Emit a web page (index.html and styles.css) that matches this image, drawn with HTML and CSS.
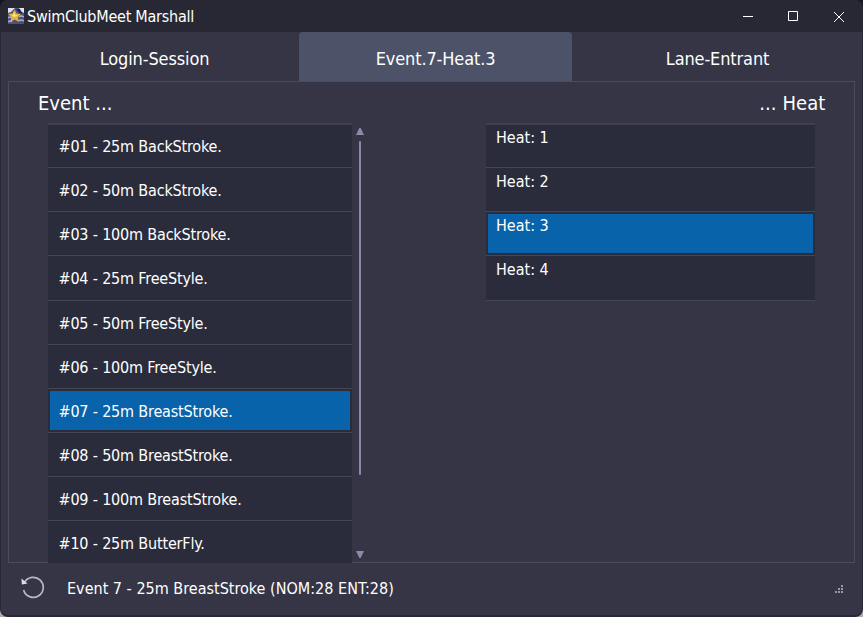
FILE: index.html
```html
<!DOCTYPE html>
<html lang="en">
<head>
<meta charset="utf-8">
<title>SwimClubMeet Marshall</title>
<link rel="stylesheet" href="styles.css">
</head>
<body>
<div class="window">
  <header class="titlebar">
    <svg class="logo" width="16" height="16" viewBox="0 0 16 16">
      <rect width="16" height="16" fill="#4a5080"/>
      <path d="M0 0H7L3 4L0 5ZM11 0H16V5L12 3Z" fill="#dfe1ed"/>
      <path d="M8 1H12L14 5L12 6Z" fill="#202545"/>
      <path d="M0 10Q2 8 4 10M0 14Q2 12 4 14M11 9Q13 7 16 9M11 13Q13 11 16 13" fill="none" stroke="#aeb2d5" stroke-width="1.3"/>
      <path d="M6.500 1.500L8.500 5.500L13 6L10 9L11 14L6.700 11.500L2.400 14L3.300 9L0 6L4.500 5.500Z" fill="#e4b33c"/>
      <path d="M6.300 4L7.200 7H10L7 9L4 8Z" fill="#ffdf7c"/>
    </svg>
    <h1 class="title">SwimClubMeet Marshall</h1>
    <svg class="controls" width="104" height="14" viewBox="0 0 104 14" fill="none" stroke="#fff">
      <path d="M0 6.500H10M45.500 1.500H54.500V10.500H45.500ZM91 2L101 12M101 2L91 12"/>
    </svg>
  </header>
  <nav class="tabs">
    <span class="tab">Login-Session</span>
    <span class="tab active">Event.7-Heat.3</span>
    <span class="tab">Lane-Entrant</span>
  </nav>
  <main class="panel">
    <section class="events">
      <h2>Event ...</h2>
      <div class="scroller">
        <ul class="list">
          <li>#01 - 25m BackStroke.</li>
          <li>#02 - 50m BackStroke.</li>
          <li>#03 - 100m BackStroke.</li>
          <li>#04 - 25m FreeStyle.</li>
          <li>#05 - 50m FreeStyle.</li>
          <li>#06 - 100m FreeStyle.</li>
          <li class="selected">#07 - 25m BreastStroke.</li>
          <li>#08 - 50m BreastStroke.</li>
          <li>#09 - 100m BreastStroke.</li>
          <li>#10 - 25m ButterFly.</li>
        </ul>
        <div class="scrollbar">
          <svg width="8" height="7" viewBox="0 0 8 7"><path d="M3.300 0H4.700L8 7H0Z"/></svg>
          <div class="thumb"></div>
          <svg width="8" height="7" viewBox="0 0 8 7"><path d="M0 0H8L4.700 7H3.300Z"/></svg>
        </div>
      </div>
    </section>
    <section class="heats">
      <h2>... Heat</h2>
      <ul class="list">
        <li>Heat: 1</li>
        <li>Heat: 2</li>
        <li class="selected">Heat: 3</li>
        <li>Heat: 4</li>
      </ul>
    </section>
  </main>
  <footer class="status">
    <svg class="refresh" width="24" height="24" viewBox="0 0 24 24">
      <path d="M3.500 7.500A10 10 0 1 1 2.600 15" fill="none" stroke="#b7b7c8" stroke-width="1.700"/>
      <path d="M0.500 3.500L0.800 9.500L6.500 8.600Z" fill="#dcdce6"/>
    </svg>
    <span class="message">Event 7 - 25m BreastStroke (NOM:28 ENT:28)</span>
    <svg class="grip" width="8" height="8" viewBox="0 0 8 8" fill="#9698ad">
      <path d="M6 0h2v2h-2zM3 3h2v2h-2zM6 3h2v2h-2zM0 6h2v2h-2zM3 6h2v2h-2zM6 6h2v2h-2z"/>
    </svg>
  </footer>
</div>
</body>
</html>
```
FILE: styles.css
```css
* { box-sizing: border-box; }
body { margin: 0; background: linear-gradient(#16161f 50%, #aaa 50%); }
.window {
  width: 863px; height: 617px;
  display: flex; flex-direction: column;
  overflow: hidden;
  border: solid #272735; border-width: 0 1px 2px;
  border-radius: 8px;
  background: #353546;
  color: #fff;
  font-family: Tahoma, "DejaVu Sans Condensed", "DejaVu Sans", sans-serif;
  font-stretch: condensed;
  font-size: 16px;
  letter-spacing: -0.18px;
  white-space: nowrap;
}
h1, h2, ul { margin: 0; padding: 0; font-weight: 400; list-style: none; }
.titlebar { height: 32px; flex: none; display: flex; align-items: center; padding: 0 17px 0 7px; background: #272834; }
.title { font-size: 16px; margin-left: 3px; line-height: 32px; padding-top: 2px; letter-spacing: -0.25px; }
.controls { margin-left: auto; margin-right: -2px; margin-top: 2px; }
.tabs { height: 49px; flex: none; display: grid; grid-template-columns: 273px 273px 273px; justify-content: center; margin-left: 13px; margin-right: 6px; }
.tab { display: flex; align-items: center; justify-content: center; font-size: 18px; padding-top: 4px; padding-left: 1px; letter-spacing: -0.13px; }
.tab:first-child { padding-right: 16px; }
.tab:last-child { padding-left: 19px; }
.tab.active { background: #4c5268; border-radius: 4px 4px 0 0; }
.panel { height: 482px; flex: none; margin: 0 7px; border: 1px solid #4a4b5c; display: flex; justify-content: space-between; }
h2 { font-size: 20px; height: 41px; line-height: 42px; letter-spacing: 0; }
.events { width: 356px; padding-left: 39px; }
.events h2 { margin-left: -10px; }
.scroller { display: flex; height: 440px; }
.list { width: 304px; }
.list li { height: 44.15px; border-top: 1px solid #454655; background: #2b2c3b; padding-left: 10.5px; line-height: 46.2px; }
.list li:first-child { border-top: 2px solid #3e3f4f; line-height: 44.2px; }
.scroller .list { overflow: hidden; }
.list li.selected { background: linear-gradient(#0863aa, #0863aa) 2px 2px / calc(100% - 4px) calc(100% - 4px) no-repeat #2b2c3b; }
.scrollbar { display: flex; flex-direction: column; align-items: center; width: 8px; margin-left: 4px; padding: 5px 0 5px; fill: #898aaa; }
.thumb { width: 2px; height: 334px; background: #898aaa; margin: 6px 0 auto; border-radius: 1px; }
.heats { width: 368px; padding-right: 39px; }
.heats h2 { text-align: right; margin-right: -10.5px; letter-spacing: 0.1px; }
.heats .list { width: 329px; border-bottom: 1px solid #454655; }
.heats .list li { line-height: 28.2px; padding-left: 10px; letter-spacing: 0; }
.heats .list li:first-child { line-height: 26.2px; }
.status { flex: 1; display: flex; align-items: center; padding: 0 19px 3px 20px; }
.refresh { margin-top: -1px; }
.message { margin-left: 22px; margin-top: 1px; letter-spacing: 0.01px; }
.grip { margin-left: auto; margin-top: 2px; }
```
